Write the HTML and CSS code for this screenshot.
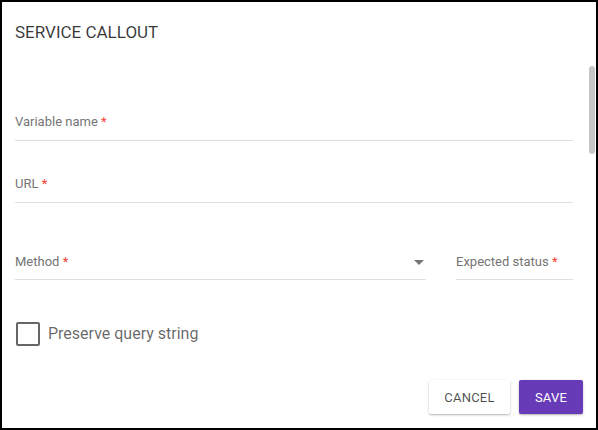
FILE: index.html
```html
<!DOCTYPE html>
<html>
<head>
<meta charset="utf-8">
<link rel="stylesheet" href="styles.css">
</head>
<body>
<div class="dialog">
  <h1 class="title">SERVICE CALLOUT</h1>
  <div class="content">
    <div class="field f1">
      <span class="label">Variable name <span class="req">*</span></span>
    </div>
    <div class="field f2">
      <span class="label">URL <span class="req">*</span></span>
    </div>
    <div class="row f3">
      <div class="field select">
        <span class="label">Method <span class="req">*</span></span>
        <span class="arrow"></span>
      </div>
      <div class="field status">
        <span class="label">Expected status <span class="req">*</span></span>
      </div>
    </div>
    <label class="check">
      <span class="box"></span>
      <span class="check-label">Preserve query string</span>
    </label>
  </div>
  <div class="actions">
    <button class="btn cancel">CANCEL</button>
    <button class="btn save">SAVE</button>
  </div>
  <div class="scroll-thumb"></div>
</div>
</body>
</html>
```
FILE: styles.css
```css
* { box-sizing: border-box; }
html, body { margin: 0; padding: 0; background: #fff; }
body { font-family: Roboto, "Noto Sans", sans-serif; }

.dialog {
  position: relative;
  width: 598px;
  height: 430px;
  border: 2px solid #000;
  background: #fff;
  display: flex;
  flex-direction: column;
}

.title {
  margin: 20px 0 0 13px;
  font-size: 17px;
  line-height: 20px;
  font-weight: 400;
  color: rgba(0,0,0,.78);
}

.content {
  padding: 0 23px 0 13px;
  display: flex;
  flex-direction: column;
}

.field {
  border-bottom: 1px solid #e0e0e0;
  padding-bottom: 10px;
  display: flex;
  align-items: center;
}
.f1 { margin-top: 72px; }
.f2 { margin-top: 35px; }

.label {
  font-size: 13px;
  line-height: 16px;
  color: #757575;
}
.req { color: #f44336; }

.row {
  display: flex;
  gap: 30px;
  margin-top: 51px;
}
.row .field { padding-bottom: 9px; }
.select { flex: 1; justify-content: space-between; }
.status { width: 117px; }
.arrow {
  width: 0;
  height: 0;
  border-left: 5px solid transparent;
  border-right: 5px solid transparent;
  border-top: 5px solid #757575;
  margin-right: 2px;
}

.check {
  display: flex;
  align-items: center;
  gap: 8px;
  margin-top: 42px;
  margin-left: 1px;
}
.box {
  width: 24px;
  height: 24px;
  border: 2px solid rgba(0,0,0,.6);
  border-radius: 2px;
}
.check-label {
  font-size: 16px;
  line-height: 20px;
  color: rgba(0,0,0,.6);
}

.actions {
  display: flex;
  justify-content: flex-end;
  gap: 9px;
  margin-top: 34px;
  padding-right: 13px;
}
.btn {
  height: 34px;
  border: none;
  border-radius: 2px;
  font-family: Roboto, "Noto Sans", sans-serif;
  font-size: 13px;
  font-weight: 400;
  letter-spacing: .2px;
  padding: 0;
}
.cancel {
  width: 81px;
  background: #fff;
  color: rgba(0,0,0,.7);
  box-shadow: 0 1px 3px rgba(0,0,0,.2), 0 1px 1px rgba(0,0,0,.12);
}
.save {
  width: 64px;
  background: #673ab7;
  color: #fff;
  box-shadow: 0 1px 3px rgba(0,0,0,.2), 0 1px 1px rgba(0,0,0,.12);
}

.scroll-thumb {
  position: absolute;
  right: 1px;
  top: 64px;
  width: 6px;
  height: 88px;
  border-radius: 3px;
  background: #c6c6c6;
}
```
